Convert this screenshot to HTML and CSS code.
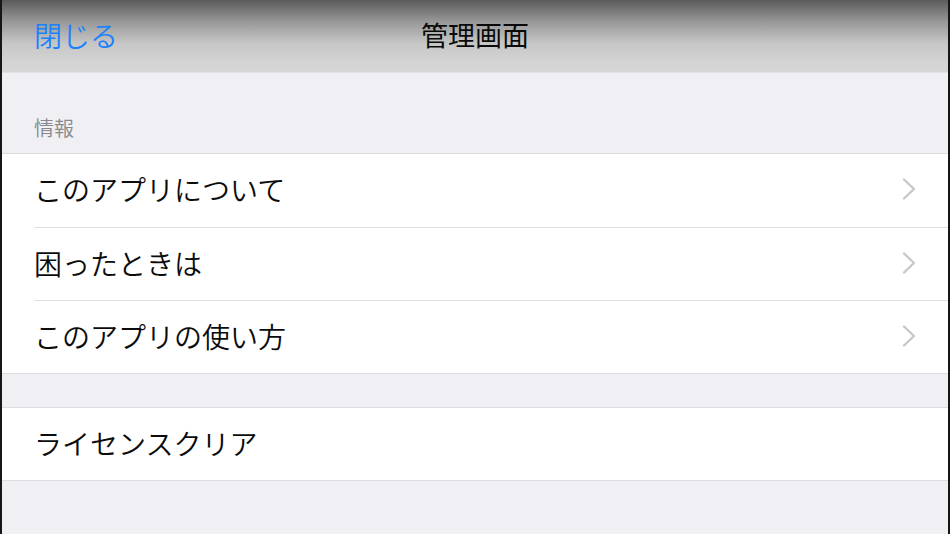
FILE: index.html
```html
<!DOCTYPE html>
<html lang="ja">
<head>
<meta charset="utf-8">
<title>管理画面</title>
<link rel="stylesheet" href="styles.css">
</head>
<body>
<div class="screen">
  <header class="navbar">
    <span class="nav-left">閉じる</span>
    <span class="nav-title">管理画面</span>
    <span class="nav-right"></span>
  </header>
  <main class="content">
    <div class="section-header">情報</div>
    <ul class="group">
      <li class="row">
        <span class="row-label">このアプリについて</span>
        <svg class="chevron" viewBox="0 0 14 22" width="14" height="22"><path d="M2 1.5 L12 11 L2 20.5" fill="none" stroke="#c7c7cc" stroke-width="2.4" stroke-linecap="round" stroke-linejoin="round"/></svg>
      </li>
      <li class="row">
        <span class="row-label">困ったときは</span>
        <svg class="chevron" viewBox="0 0 14 22" width="14" height="22"><path d="M2 1.5 L12 11 L2 20.5" fill="none" stroke="#c7c7cc" stroke-width="2.4" stroke-linecap="round" stroke-linejoin="round"/></svg>
      </li>
      <li class="row">
        <span class="row-label">このアプリの使い方</span>
        <svg class="chevron" viewBox="0 0 14 22" width="14" height="22"><path d="M2 1.5 L12 11 L2 20.5" fill="none" stroke="#c7c7cc" stroke-width="2.4" stroke-linecap="round" stroke-linejoin="round"/></svg>
      </li>
    </ul>
    <ul class="group group-second">
      <li class="row">
        <span class="row-label">ライセンスクリア</span>
      </li>
    </ul>
  </main>
</div>
</body>
</html>
```

FILE: styles.css
```css
html, body {
  margin: 0;
  padding: 0;
  height: 100%;
}
body {
  font-family: "Noto Sans CJK JP", "Noto Sans", sans-serif;
  background: #efeff4;
  overflow: hidden;
}
.screen {
  box-sizing: border-box;
  height: 534px;
  width: 950px;
  border-left: 2px solid #161616;
  border-right: 2px solid #161616;
  background: #efeff4;
  display: flex;
  flex-direction: column;
}
.navbar {
  height: 73px;
  box-sizing: border-box;
  border-bottom: 1px solid #e2e2e4;
  background: linear-gradient(to bottom, #5a5a5a 0%, #989898 30%, #c6c6c6 60%, #d3d3d3 85%, #d6d6d6 100%);
  display: grid;
  grid-template-columns: 1fr auto 1fr;
  align-items: center;
  padding: 0 32px 3px 32px;
}
.nav-left {
  font-size: 28px;
  font-weight: 350;
  color: #1a82fb;
  line-height: 1;
  justify-self: start;
}
.nav-title {
  font-size: 27px;
  color: #0a0a0a;
  line-height: 1;
}
.content {
  flex: 1;
}
.section-header {
  font-size: 20px;
  font-weight: 350;
  color: #88888d;
  line-height: 1;
  padding: 45px 0 0 32px;
  height: 35px;
}
.group {
  list-style: none;
  margin: 0;
  padding: 0;
  background: #ffffff;
  border-top: 1px solid #dcdcdf;
  border-bottom: 1px solid #dcdcdf;
}
.group-second {
  margin-top: 33px;
}
.row {
  box-sizing: border-box;
  height: 73px;
  display: flex;
  align-items: center;
  justify-content: space-between;
  margin-left: 32px;
  padding-right: 32px;
  padding-bottom: 3px;
  border-top: 1px solid #e0e0e3;
}
.row:first-child {
  border-top: none;
}
.group-second .row {
  height: 72px;
  padding-bottom: 2px;
}
.row-label {
  font-size: 28px;
  font-weight: 350;
  color: #0b0b0b;
  line-height: 1;
}
.chevron {
  display: block;
}
```
